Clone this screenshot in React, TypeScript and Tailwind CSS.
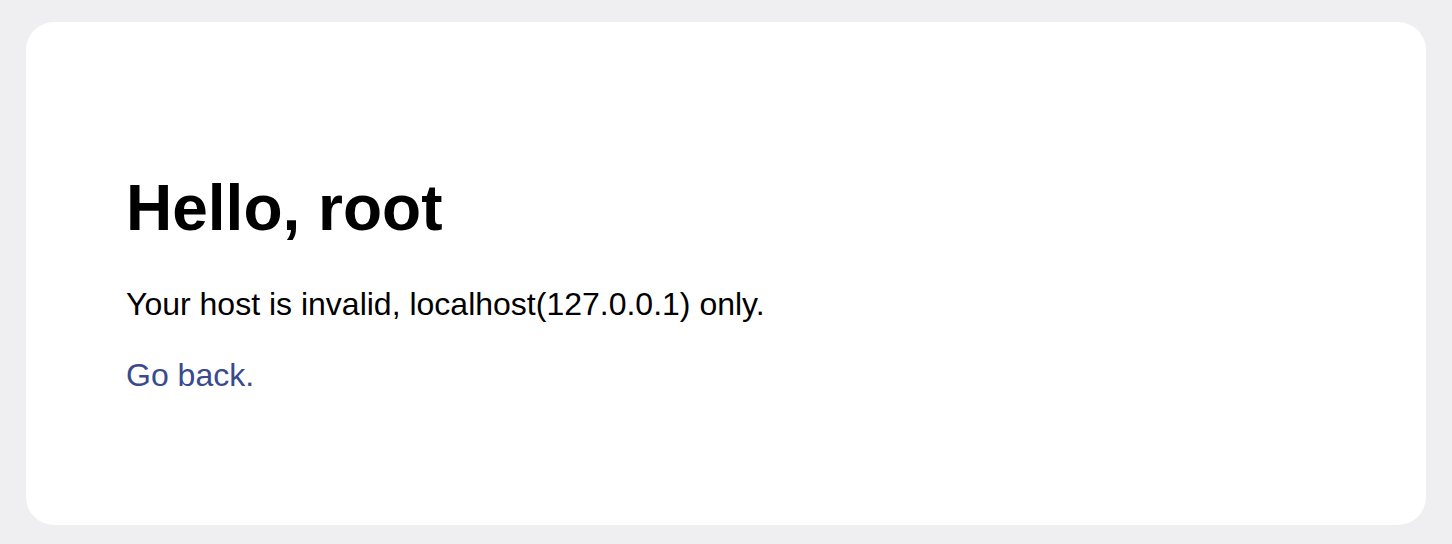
import React from 'react';

const App: React.FC = () => {
  return (
    <div
      className="min-h-screen w-full bg-[#efeff1] pt-[22px] pb-[19px] px-[26px]"
      style={{ fontFamily: '"Liberation Sans", Arial, sans-serif' }}
    >
      <div className="h-[503px] bg-white rounded-[28px] pl-[100px] pt-[154px]">
        <h1 className="text-[64px] leading-[64px] font-bold text-black mb-[48px]">Hello, root</h1>
        <p className="text-[32px] leading-[32px] text-black mb-[39px]">
          Your host is invalid, localhost(127.0.0.1) only.
        </p>
        <a href="#" className="block text-[32px] leading-[32px] text-[#3a4a8e]">
          Go back.
        </a>
      </div>
    </div>
  );
};

export default App;
